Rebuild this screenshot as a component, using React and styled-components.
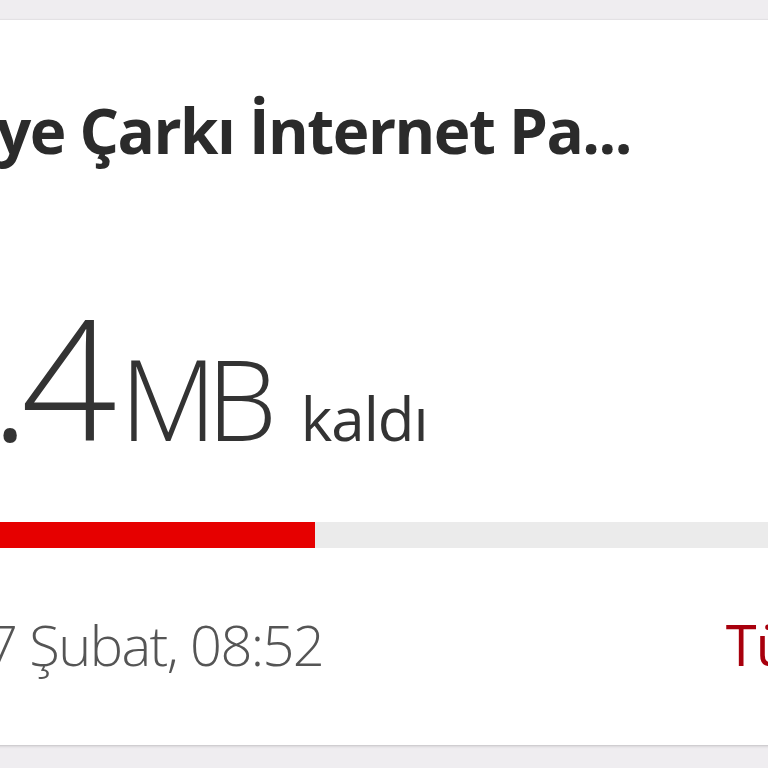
import React from "react";
import styled, { createGlobalStyle } from "styled-components";

const Global = createGlobalStyle`
  html, body { margin: 0; padding: 0; background: #efedf0; overflow: hidden; }
  body { font-family: "Open Sans", "Noto Sans", sans-serif; }
`;

const Page = styled.div`
  width: 768px;
  height: 768px;
  padding-top: 20px;
  box-sizing: border-box;
  overflow: hidden;
`;

const Card = styled.div`
  margin-left: -20px;
  width: 828px;
  height: 725px;
  background: #ffffff;
  box-shadow: 0 1px 3px rgba(0, 0, 0, 0.18), 0 0 1px rgba(0, 0, 0, 0.12);
  display: flex;
  flex-direction: column;
  padding-left: 20px;
  box-sizing: border-box;
`;

const Title = styled.h2`
  margin: 70px 0 0 ${(p) => p.$shift}px;
  font-family: "Open Sans", sans-serif;
  font-weight: 700;
  font-size: 62px;
  line-height: 80px;
  color: #2b2b2b;
  letter-spacing: -1.5px;
  white-space: nowrap;
`;

const Amount = styled.div`
  margin: 122px 0 0 ${(p) => p.$shift}px;
  display: flex;
  align-items: baseline;
  color: #333333;
  white-space: nowrap;
  height: 140px;
`;

const Number = styled.span`
  font-size: 168px;
  font-weight: 300;
  line-height: 1;
  letter-spacing: -9px;
`;

const Unit = styled.span`
  font-size: 112px;
  font-weight: 300;
  line-height: 1;
  margin-left: 12px;
  letter-spacing: -10px;
`;

const Left = styled.span`
  font-size: 60px;
  font-weight: 400;
  line-height: 1;
  margin-left: 34px;
  letter-spacing: -1px;
`;

const Track = styled.div`
  margin-top: 90px;
  margin-left: -20px;
  height: 26px;
  background: #ebebeb;
`;

const Fill = styled.div`
  height: 100%;
  background: #e60000;
`;

const Footer = styled.div`
  margin-top: 58px;
  display: flex;
  justify-content: space-between;
  align-items: baseline;
  width: 768px;
  white-space: nowrap;
`;

const Date = styled.span`
  margin-left: ${(p) => p.$shift}px;
  font-size: 56px;
  font-weight: 300;
  color: #555555;
  letter-spacing: -1.6px;
`;

const Link = styled.a`
  font-size: 56px;
  font-weight: 400;
  color: #a8000d;
  margin-right: -21px;
  letter-spacing: -1px;
  text-decoration: none;
`;

export default function App() {
  return (
    <>
      <Global />
      <Page>
        <Card>
          <Title $shift={-4}>ye Çarkı İnternet Pa...</Title>
          <Amount $shift={-10}>
            <Number>.4</Number>
            <Unit>MB</Unit>
            <Left>kaldı</Left>
          </Amount>
          <Track>
            <Fill style={{ width: "335px" }} />
          </Track>
          <Footer>
            <Date $shift={-14}>7 Şubat, 08:52</Date>
            <Link>Tü</Link>
          </Footer>
        </Card>
      </Page>
    </>
  );
}
